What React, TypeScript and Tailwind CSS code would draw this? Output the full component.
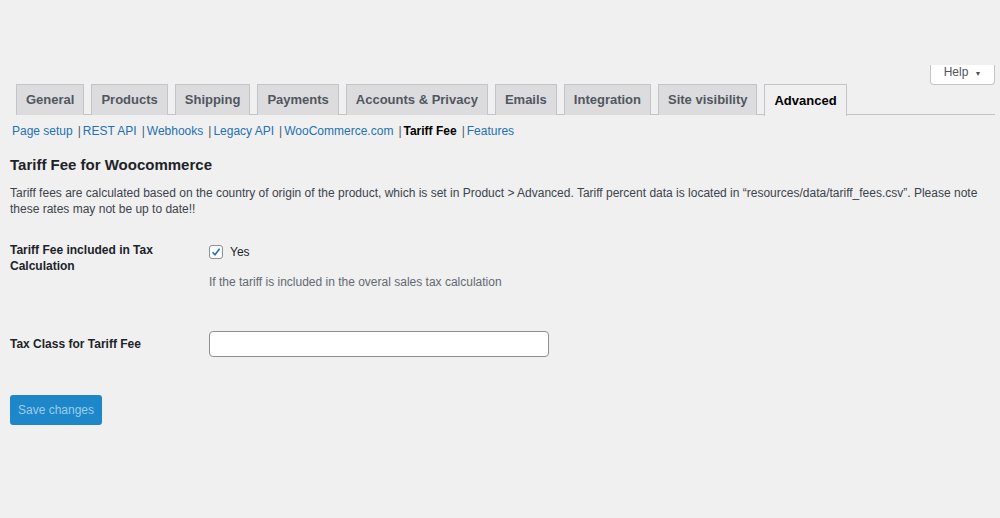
export default function App() {
  const tabs = ["General","Products","Shipping","Payments","Accounts & Privacy","Emails","Integration","Site visibility"];
  const sub = ["Page setup","REST API","Webhooks","Legacy API","WooCommerce.com"];
  return (
    <div className="relative w-[1000px] h-[518px] bg-[#f0f0f1] text-[#1d2327] overflow-hidden" style={{fontFamily: "'Liberation Sans', Arial, sans-serif"}}>
      <div className="absolute left-[930px] top-[65px] w-[65px] h-[20px] overflow-hidden">
        <div className="absolute bottom-0 left-0 w-[65px] h-[20px] bg-white border border-t-0 border-[#c3c4c7] rounded-b-[4px] flex items-start justify-center gap-1.5 text-[12px] leading-[12px] text-[#50575e]">
          <span className="mt-[1px]">Help</span><span className="text-[7px] mt-[3px]">▼</span>
        </div>
      </div>
      <div className="pt-[84px] pl-[16px] pr-[5px]">
        <div className="flex gap-[7px] border-b border-[#c3c4c7] h-[31px]">
          {tabs.map(t => (
            <div key={t} className="h-[31px] px-[9px] flex items-center bg-[#dcdcde] border border-[#c3c4c7] border-b-0 text-[13px] font-bold text-[#50575e]">{t}</div>
          ))}
          <div className="h-[32px] px-[9px] flex items-center bg-[#f0f0f1] border border-[#c3c4c7] border-b-0 text-[13px] font-bold text-black relative z-10">Advanced</div>
        </div>
      </div>
      <div className="pl-[12px] mt-[8px] flex items-center text-[12px] h-[16px]">
        {sub.map(s => (<span key={s} className="flex items-center"><span className="text-[#2271b1]">{s}</span><span className="text-[#50575e] ml-[5px] mr-[2px]">|</span></span>))}
        <span className="font-bold text-black">Tariff Fee</span>
        <span className="text-[#50575e] ml-[5px] mr-[2px]">|</span>
        <span className="text-[#2271b1]">Features</span>
      </div>
      <div className="pl-[10px] pr-[10px]">
        <h2 className="mt-[16px] text-[15px] font-bold leading-[20px]">Tariff Fee for Woocommerce</h2>
        <p className="mt-[10px] text-[12px] leading-[16px] text-[#3c434a]">Tariff fees are calculated based on the country of origin of the product, which is set in Product &gt; Advanced. Tariff percent data is located in “resources/data/tariff_fees.csv”. Please note these rates may not be up to date!!</p>
        <div className="mt-[21px] flex">
          <div className="w-[199px] text-[12px] font-bold leading-[16px] pt-[4px]">Tariff Fee included in Tax Calculation</div>
          <div>
            <div className="flex items-center gap-[7px] pt-[5px]">
              <div className="w-[14px] h-[14px] bg-white border border-[#8c8f94] rounded-[3px] flex items-center justify-center">
                <svg width="12" height="12" viewBox="0 0 12 12"><path d="M2.5 6.2 L5 8.7 L9.6 2.8" stroke="#2271b1" strokeWidth="1.6" fill="none"/></svg>
              </div>
              <span className="text-[12px] text-[#1d2327]">Yes</span>
            </div>
            <div className="mt-[12px] text-[12px] text-[#646970]">If the tariff is included in the overal sales tax calculation</div>
          </div>
        </div>
        <div className="mt-[40px] flex items-center">
          <div className="w-[199px] text-[12px] font-bold">Tax Class for Tariff Fee</div>
          <div className="w-[340px] h-[26px] bg-white border border-[#8c8f94] rounded-[4px]" />
        </div>
        <button className="mt-[38px] w-[92px] h-[30px] bg-[#1e87c9] rounded-[3px] text-[12px] text-[#9dcbec]">Save changes</button>
      </div>
    </div>
  );
}
